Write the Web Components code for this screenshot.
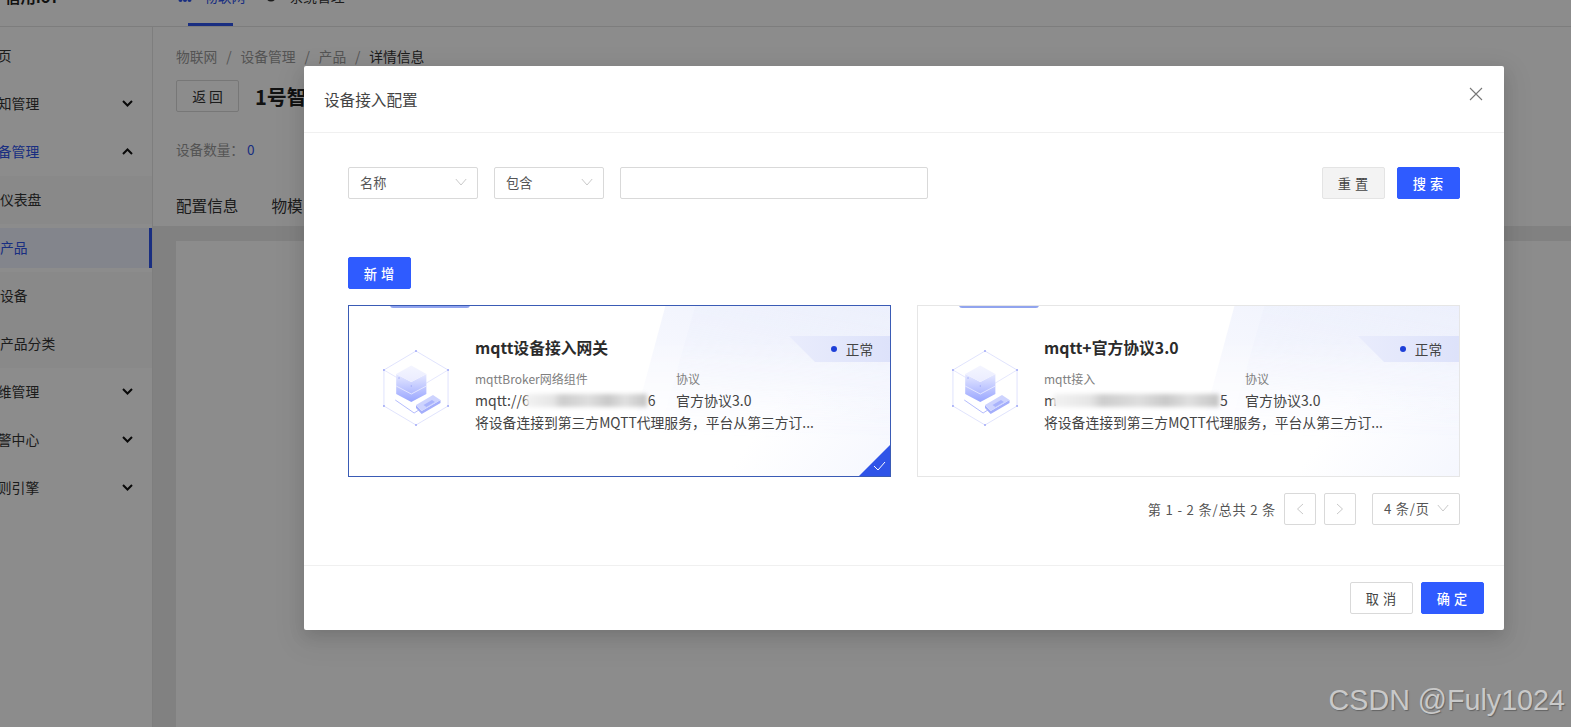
<!DOCTYPE html>
<html lang="zh">
<head>
<meta charset="utf-8">
<title>设备接入配置</title>
<style>
  html, body { margin: 0; height: 100%; overflow: hidden; }
  body { font-family: "Noto Sans CJK SC", "Noto Sans", sans-serif; color: #333; }
</style>
</head>
<body>
<app-shell></app-shell>
<script>
const CHEVRON = `<svg width="11" height="7" viewBox="0 0 11 7"><path d="M1 1l4.500 4.500L10 1" fill="none" stroke="currentColor" stroke-width="2"/></svg>`;
const ARROW = `<svg width="12" height="8" viewBox="0 0 12 8"><path d="M.8 1l5.200 6 5.200-6" fill="none" stroke="#c9c9c9" stroke-width="1"/></svg>`;

class TopBar extends HTMLElement {
  constructor() {
    super();
    this.attachShadow({ mode: "open" }).innerHTML = `
      <style>
        :host { display: flex; align-items: center; height: 60px; margin-top: -33px; padding-bottom: 2px; background: #fff; border-bottom: 1px solid #e4e4e4; box-sizing: border-box; font-size: 13.800px; }
        .logo { width: 178px; padding-left: 5px; box-sizing: border-box; font-size: 15.400px; font-weight: 700; color: #222; }
        .tab { display: flex; align-items: center; gap: 12px; position: relative; }
        .tab.on { color: #2f54eb; margin-right: 20px; }
        .tab.on::after { content: ""; position: absolute; left: 10px; width: 45px; height: 3px; bottom: -20px; background: #2f54eb; }
        svg { flex: none; }
      </style>
      <div class="logo">信用IoT</div>
      <div class="tab on"><svg width="14" height="14" viewBox="0 0 14 14" fill="#2f54eb"><circle cx="2.500" cy="2.500" r="2"/><circle cx="7" cy="2.500" r="2"/><circle cx="11.500" cy="2.500" r="2"/><circle cx="2.500" cy="11" r="2"/><circle cx="7" cy="11" r="2"/><circle cx="11.500" cy="11" r="2"/></svg>物联网</div>
      <div class="tab"><svg width="12" height="14" viewBox="0 0 12 14"><circle cx="6" cy="7" r="4.500" fill="none" stroke="#333" stroke-width="2"/></svg>系统管理</div>`;
  }
}

class MenuItem extends HTMLElement {
  constructor() {
    super();
    this.attachShadow({ mode: "open" }).innerHTML = `
      <style>
        :host { display: flex; align-items: center; justify-content: space-between; height: 48px; padding: 0 19px 2px 0; box-sizing: border-box; font-size: 13.800px; white-space: nowrap; color: #333; }
        :host([sub]) { background: #fafafa; }
        :host([blue]) { color: #2f54eb; }
        :host([active]) { color: #2f54eb; background: #eef2ff; border-right: 3px solid #2f54eb; height: 40px; margin: 4px 0; }
        .txt { margin-left: -16px; }
        :host([sub]) .txt { margin-left: 0; }
        .arrow { display: flex; color: #111; }
        :host([open]) .arrow { transform: rotate(180deg); }
      </style>
      <span class="txt"><slot></slot></span>
      <span class="arrow">${this.hasAttribute("arrow") ? CHEVRON : ""}</span>`;
  }
}

class SideMenu extends HTMLElement {
  constructor() {
    super();
    this.attachShadow({ mode: "open" }).innerHTML = `
      <style>
        :host { display: block; width: 153px; flex: none; padding-top: 5px; box-sizing: border-box; background: #fff; border-right: 1px solid #e6e6e6; }
      </style>
      <slot></slot>`;
  }
}

class DetailPage extends HTMLElement {
  constructor() {
    super();
    this.attachShadow({ mode: "open" }).innerHTML = `
      <style>
        :host { display: flex; flex-direction: column; flex: 1; min-width: 0; background: #ececec; color: #333; }
        .head { height: 199px; box-sizing: border-box; padding: 19px 23px 0; background: #fff; }
        .crumb { font-size: 13.800px; line-height: 20px; color: #999; display: flex; gap: 8.800px; }
        .crumb b { font-weight: 400; color: #333; }
        .row { display: flex; align-items: center; gap: 16px; margin-top: 14px; }
        .back { width: 63px; height: 32px; box-sizing: border-box; border: 1px solid #d9d9d9; border-radius: 2px; font-size: 13.800px; display: flex; align-items: center; justify-content: center; letter-spacing: 3px; text-indent: 3px; }
        h1 { margin: 0; font-size: 20px; font-weight: 700; color: #222; }
        .count { margin-top: 27px; font-size: 13.600px; line-height: 20px; color: #999; }
        .count span { color: #2f54eb; }
        .tabs { display: flex; gap: 33px; margin-top: 35px; font-size: 15.600px; }
        .body { flex: 1; margin: 15px 0 0 23px; background: #fff; }
      </style>
      <div class="head">
        <div class="crumb"><span>物联网</span><span>/</span><span>设备管理</span><span>/</span><span>产品</span><span>/</span><b>详情信息</b></div>
        <div class="row"><div class="back">返回</div><h1>1号智</h1></div>
        <div class="count">设备数量： <span>0</span></div>
        <div class="tabs"><span>配置信息</span><span>物模</span></div>
      </div>
      <div class="body"></div>`;
  }
}

class SelectBox extends HTMLElement {
  constructor() {
    super();
    this.attachShadow({ mode: "open" }).innerHTML = `
      <style>
        :host { display: flex; align-items: center; justify-content: space-between; height: 32px; box-sizing: border-box; padding: 0 10px 2px 11px; border: 1px solid #d9d9d9; border-radius: 2px; background: #fff; font-size: 13.200px; color: #555; }
        svg { display: block; }
      </style>
      <span><slot></slot></span>${ARROW}`;
  }
}

class UiButton extends HTMLElement {
  constructor() {
    super();
    this.attachShadow({ mode: "open" }).innerHTML = `
      <style>
        :host { display: flex; align-items: center; justify-content: center; width: 63px; height: 32px; box-sizing: border-box; border: 1px solid #d9d9d9; border-radius: 2px; background: #fff; font-size: 13.200px; color: #444; letter-spacing: 4px; text-indent: 3px; }
        :host([primary]) { background: #2f5bff; border-color: #2f5bff; color: #fff; font-weight: 500; }
        :host([muted]) { background: #f3f3f3; border-color: #e4e4e4; }
      </style>
      <slot></slot>`;
  }
}

class CubeIcon extends HTMLElement {
  constructor() {
    super();
    this.attachShadow({ mode: "open" }).innerHTML = `
      <style>:host { display: block; width: 66px; height: 76px; flex: none; } svg { display: block; }</style>
      <svg width="66" height="76" viewBox="-1 -1 70 76" preserveAspectRatio="none">
        <defs>
          <linearGradient id="g" x1="0" y1="0" x2="0" y2="1"><stop offset="0" stop-color="#e6e9ff"/><stop offset=".45" stop-color="#c3caff"/><stop offset="1" stop-color="#98a5ff"/></linearGradient>
          <linearGradient id="t" x1="0" y1="0" x2="0" y2="1"><stop offset="0" stop-color="#f4f5ff"/><stop offset="1" stop-color="#eaecff"/></linearGradient>
        </defs>
        <path d="M34 0l34 19v36L34 74 0 55V19z" fill="none" stroke="#d2d6fc" stroke-width=".7"/>
        <path d="M0 19l29 16M68 19L38 36" fill="none" stroke="#d8dbfc" stroke-width=".7"/>
        <path d="M12 49l20 13 5-3" fill="none" stroke="#a8b1fb" stroke-width=".9"/>
        <path d="M13 23v20l16 8 16-8V23l-16 8z" fill="url(#g)"/>
        <path d="M13 23l16-8.500L45 23l-16 8z" fill="url(#t)"/>
        <path d="M13 35l16 8 16-8" fill="none" stroke="#eef0ff" stroke-width=".8"/>
        <path d="M34 54v3l6 6 20-11v-3l-20 11z" fill="#a4aefb"/>
        <path d="M34 54l18-10 8 5-20 11z" fill="#cdd3fe"/>
        <path d="M42 54l9-5 3 2-9 5z" fill="#a9b3fc"/>
        <g fill="#9aa3f6"><circle cx="34" cy="0" r="1"/><circle cx="68" cy="19" r="1"/><circle cx="68" cy="55" r="1"/><circle cx="34" cy="74" r="1"/><circle cx="0" cy="55" r="1"/><circle cx="0" cy="19" r="1"/><circle cx="16" cy="27" r=".7"/><circle cx="29" cy="35" r=".7"/></g>
      </svg>`;
  }
}

class AccessCard extends HTMLElement {
  constructor() {
    super();
    this.attachShadow({ mode: "open" }).innerHTML = `
      <style>
        :host { display: block; position: relative; height: 172px; box-sizing: border-box; border: 1px solid #e6e6e6; overflow: hidden; background: linear-gradient(305deg, #f5f7fe 0, #fff 25%); }
        :host([selected]) { border-color: #3a5bb5; }
        .bg, .bg2 { position: absolute; inset: 0; -webkit-mask-image: linear-gradient(180deg, #000 20%, transparent 80%); mask-image: linear-gradient(180deg, #000 20%, transparent 80%); }
        .bg { background: linear-gradient(195deg, #eff2fd 0%, #f8f9fe 45%, #fdfdff 85%); clip-path: polygon(58.500% 0, 100% 0, 100% 100%, 50% 100%); }
        .bg2 { background: linear-gradient(190deg, #e9edfc, rgba(255,255,255,0) 70%); clip-path: polygon(64% 0, 100% 0, 100% 100%, 55% 100%); opacity: .35; }
        .tab { position: absolute; top: -1px; left: 41px; width: 80px; height: 3px; background: #91a4ee; border-radius: 0 0 3px 3px; }
        .body { position: relative; display: flex; align-items: center; gap: 26px; height: 100%; padding: 0 0 6px 34px; box-sizing: border-box; }
        .info { width: 345px; flex: none; margin-top: -6px; }
        .title { font-size: 15.800px; line-height: 22px; font-weight: 700; color: #2b2b2b; margin-bottom: 10px; white-space: nowrap; }
        .cols { display: grid; grid-template-columns: 201px 1fr; }
        .lab { font-size: 12px; line-height: 20px; color: #808080; white-space: nowrap; }
        .val { display: flex; align-items: center; font-size: 14px; line-height: 22px; color: #444; white-space: nowrap; }
        .desc { font-size: 13.800px; line-height: 22px; color: #444; white-space: nowrap; }
        .val i { display: block; height: 13px; width: var(--bw); margin: 0 1px 0 -4px; background: linear-gradient(90deg, #f2f2f2 0, #e6e6e6 22%, #cdcdcd 30%, #dedede 52%, #c9c9c9 68%, #e0e0e0 82%, #c4c4c4 100%); filter: blur(2px); }
        .status { position: absolute; top: 30px; right: 0; width: 101px; height: 26px; padding-bottom: 1px; background: linear-gradient(90deg, #e9ecfc, #dde2fa); clip-path: polygon(0 0, 100% 0, 100% 100%, 26px 100%); display: flex; align-items: center; justify-content: flex-end; padding-right: 17px; box-sizing: border-box; font-size: 13.600px; color: #444; gap: 9px; }
        .status::before { content: ""; width: 6px; height: 6px; border-radius: 50%; background: #1d3fd8; }
        .check { position: absolute; right: 0; bottom: 0; width: 31px; height: 31px; background: #2f54e8; clip-path: polygon(100% 0, 100% 100%, 0 100%); display: none; }
        :host([selected]) .check { display: block; }
        .check svg { position: absolute; right: 4px; bottom: 5px; }
      </style>
      <div class="bg"></div><div class="bg2"></div>
      <div class="tab"></div>
      <div class="body">
        <cube-icon></cube-icon>
        <div class="info">
          <div class="title">${this.getAttribute("name")}</div>
          <div class="cols">
            <div class="lab">${this.getAttribute("kind")}</div><div class="lab">协议</div>
            <div class="val" style="--bw:${this.getAttribute("bw")}px"><span>${this.getAttribute("head")}</span><i></i><span>${this.getAttribute("tail")}</span></div><div class="val">官方协议3.0</div>
          </div>
          <div class="desc">将设备连接到第三方MQTT代理服务，平台从第三方订...</div>
        </div>
      </div>
      <div class="status">正常</div>
      <div class="check"><svg width="13" height="10" viewBox="0 0 13 10"><path d="M1 5l4 4 7-8" fill="none" stroke="#fff" stroke-width="1"/></svg></div>`;
  }
}

class PagerBar extends HTMLElement {
  constructor() {
    super();
    this.attachShadow({ mode: "open" }).innerHTML = `
      <style>
        :host { display: flex; align-items: center; justify-content: flex-end; gap: 8px; font-size: 13.200px; color: #555; letter-spacing: .8px; }
        .pg { width: 32px; height: 32px; box-sizing: border-box; border: 1px solid #d9d9d9; border-radius: 2px; display: flex; align-items: center; justify-content: center; }
        select-box { width: 88px; margin-left: 8px; }
      </style>
      <span>第 1 - 2 条/总共 2 条</span>
      <div class="pg"><svg width="8" height="12" viewBox="0 0 8 12"><path d="M7 1L1.500 6 7 11" fill="none" stroke="#c9c9c9"/></svg></div>
      <div class="pg"><svg width="8" height="12" viewBox="0 0 8 12"><path d="M1 1l5.500 5L1 11" fill="none" stroke="#c9c9c9"/></svg></div>
      <select-box>4 条/页</select-box>`;
  }
}

class ModalDialog extends HTMLElement {
  constructor() {
    super();
    this.attachShadow({ mode: "open" }).innerHTML = `
      <style>
        :host { display: flex; flex-direction: column; position: absolute; left: 304px; top: 66px; width: 1200px; height: 564px; background: #fff; border-radius: 2px; box-shadow: 0 6px 16px rgba(0,0,0,.12), 0 9px 28px 8px rgba(0,0,0,.05); }
        header { display: flex; align-items: center; justify-content: space-between; height: 67px; box-sizing: border-box; padding: 0 21px 0 20px; border-bottom: 1px solid #f0f0f0; font-size: 15.600px; color: #444; flex: none; }
        header svg { display: block; margin-top: -11px; }
        main { flex: 1; padding: 34px 44px 0; }
        .filter { display: flex; gap: 16px; }
        .filter input { width: 308px; height: 32px; box-sizing: border-box; border: 1px solid #d9d9d9; border-radius: 2px; outline: none; background: #fff; }
        .filter .push { margin-left: auto; }
        .filter ui-button + ui-button { margin-left: -4px; }
        .add { margin: 58px 0 16px; }
        .cards { display: grid; grid-template-columns: 543px 543px; justify-content: space-between; }
        pager-bar { margin-top: 16px; }
        footer { height: 65px; box-sizing: border-box; flex: none; border-top: 1px solid #f0f0f0; display: flex; align-items: center; justify-content: flex-end; gap: 8px; padding: 0 20px; }
      </style>
      <header>
        <span>设备接入配置</span>
        <svg width="14" height="14" viewBox="0 0 14 14"><path d="M1 1l12 12M13 1L1 13" stroke="#777" stroke-width="1.100" fill="none"/></svg>
      </header>
      <main>
        <div class="filter">
          <select-box style="width:130px">名称</select-box>
          <select-box style="width:110px">包含</select-box>
          <input>
          <ui-button class="push" muted>重置</ui-button>
          <ui-button primary>搜索</ui-button>
        </div>
        <div class="add"><ui-button primary>新增</ui-button></div>
        <div class="cards">
          <access-card selected name="mqtt设备接入网关" kind="mqttBroker网络组件" head="mqtt://6" tail="6" bw="121"></access-card>
          <access-card name="mqtt+官方协议3.0" kind="mqtt接入" head="m" tail="5" bw="166"></access-card>
        </div>
        <pager-bar></pager-bar>
      </main>
      <footer>
        <ui-button>取消</ui-button>
        <ui-button primary>确定</ui-button>
      </footer>`;
  }
}

class AppShell extends HTMLElement {
  constructor() {
    super();
    this.attachShadow({ mode: "open" }).innerHTML = `
      <style>
        :host { display: flex; flex-direction: column; position: relative; width: 100vw; height: 100vh; overflow: hidden; }
        .main { display: flex; flex: 1; min-height: 0; }
        .overlay { position: absolute; inset: 0; background: rgba(0,0,0,.45); }
        .mark { position: absolute; right: 6px; bottom: 9px; font: 28.700px/36px "Liberation Sans", sans-serif; color: #c9c9c9; text-shadow: 1px 1px 1px rgba(60,60,60,.5); }
      </style>
      <top-bar></top-bar>
      <div class="main">
        <side-menu>
          <menu-item>首页</menu-item>
          <menu-item arrow>通知管理</menu-item>
          <menu-item arrow open blue>设备管理</menu-item>
          <menu-item sub>仪表盘</menu-item>
          <menu-item sub active>产品</menu-item>
          <menu-item sub>设备</menu-item>
          <menu-item sub>产品分类</menu-item>
          <menu-item arrow>运维管理</menu-item>
          <menu-item arrow>告警中心</menu-item>
          <menu-item arrow>规则引擎</menu-item>
        </side-menu>
        <detail-page></detail-page>
      </div>
      <div class="overlay"></div>
      <modal-dialog></modal-dialog>
      <div class="mark">CSDN @Fuly1024</div>`;
  }
}

customElements.define("top-bar", TopBar);
customElements.define("menu-item", MenuItem);
customElements.define("side-menu", SideMenu);
customElements.define("detail-page", DetailPage);
customElements.define("select-box", SelectBox);
customElements.define("ui-button", UiButton);
customElements.define("cube-icon", CubeIcon);
customElements.define("access-card", AccessCard);
customElements.define("pager-bar", PagerBar);
customElements.define("modal-dialog", ModalDialog);
customElements.define("app-shell", AppShell);
</script>
</body>
</html>
